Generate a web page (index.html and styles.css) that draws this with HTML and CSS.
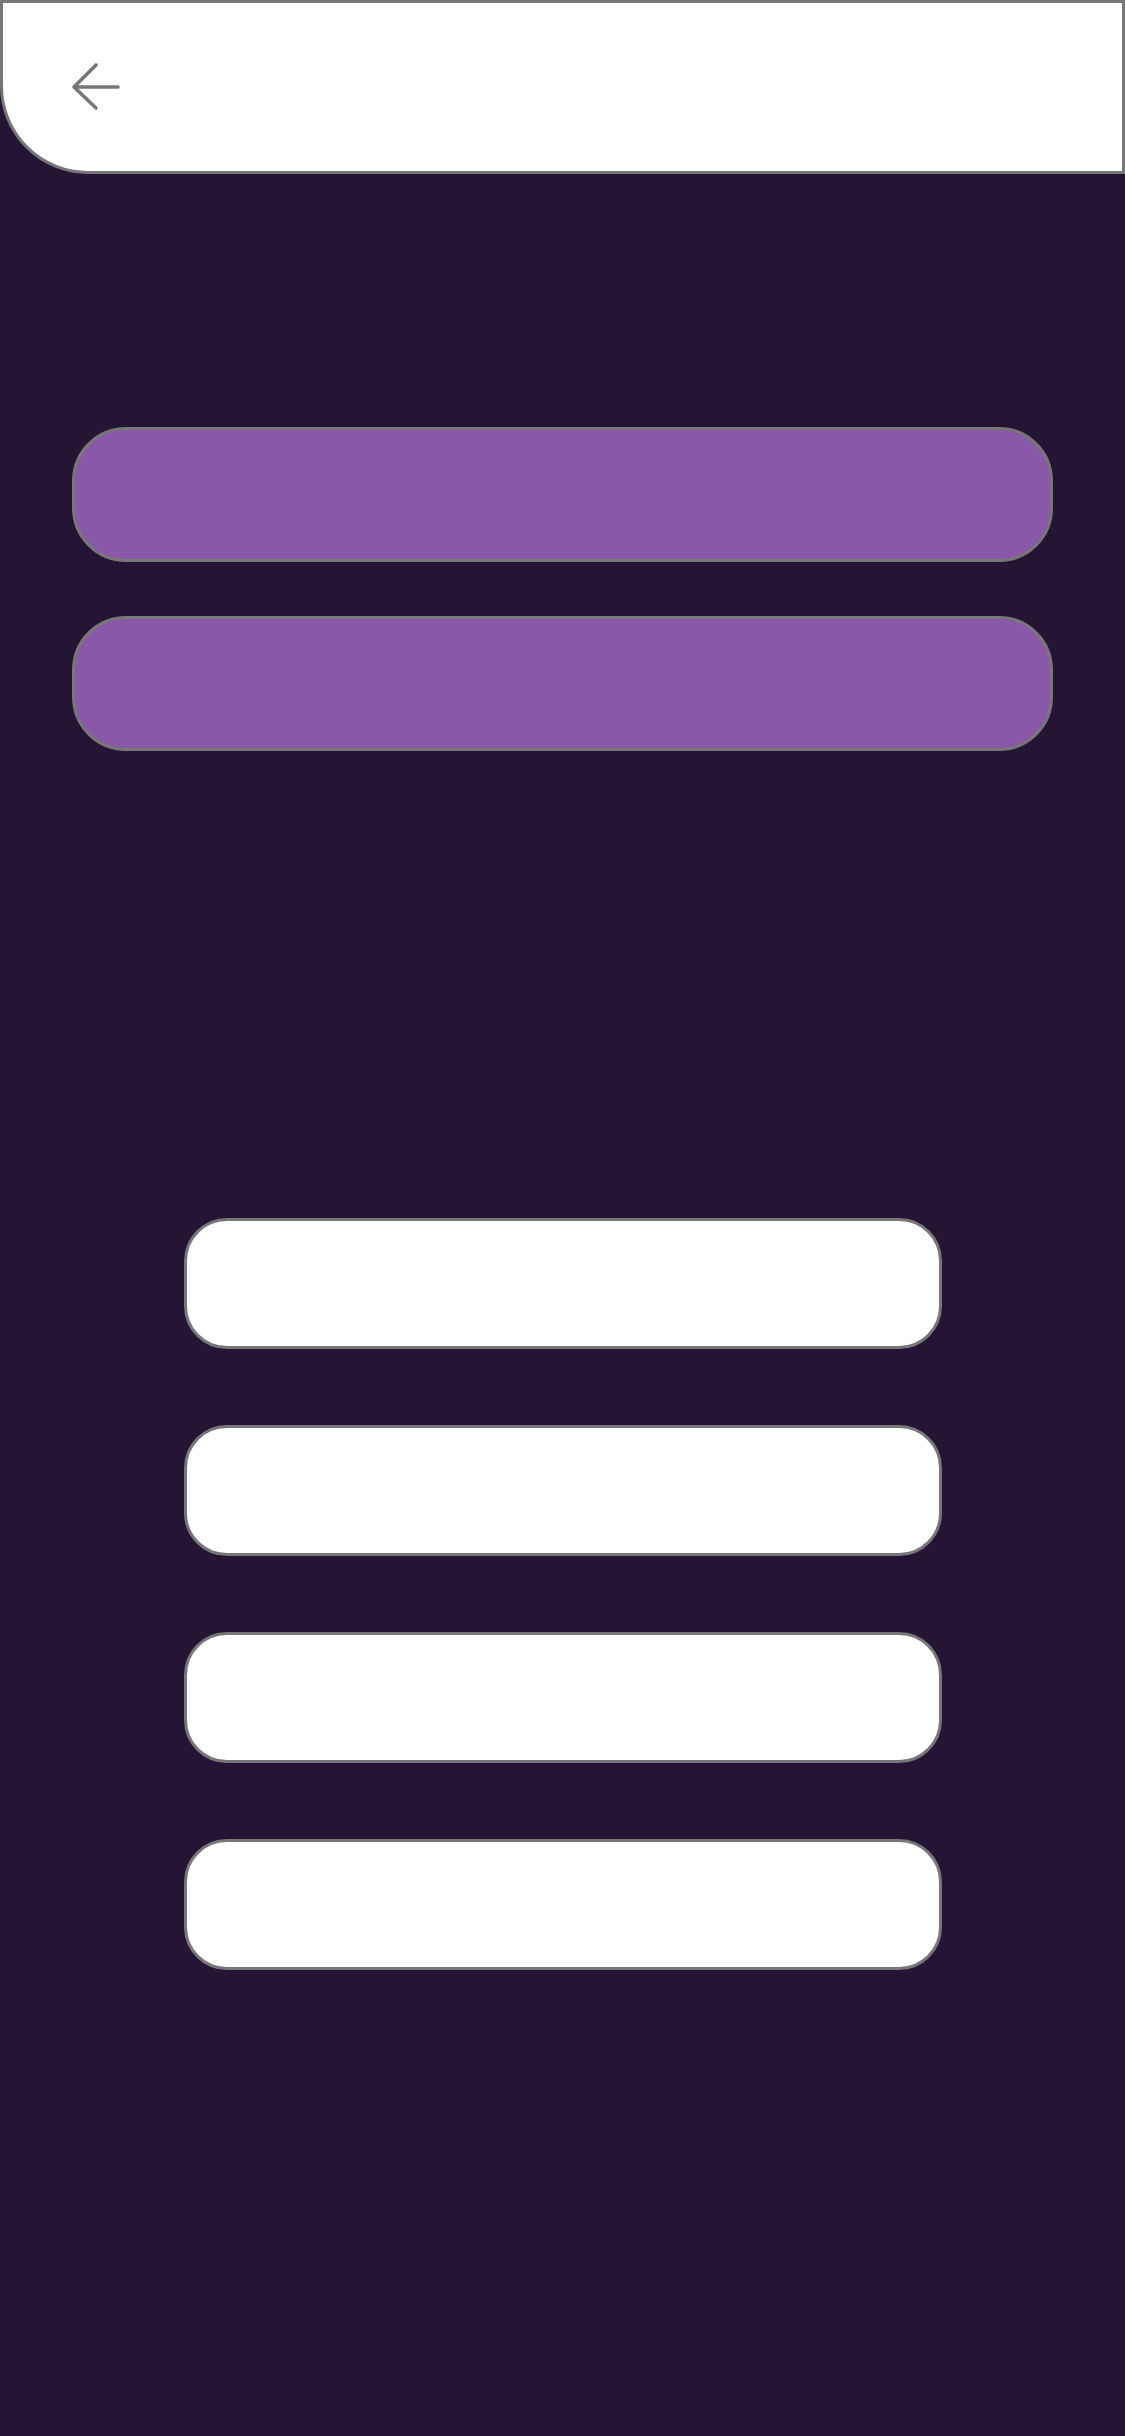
FILE: index.html
```html
<!DOCTYPE html>
<html lang="en">
<head>
<meta charset="utf-8">
<title>Screen</title>
<link rel="stylesheet" href="styles.css">
</head>
<body>
<div class="screen">
  <header class="topbar">
    <button class="back" aria-label="Back">
      <svg width="52" height="50" viewBox="0 0 52 50" aria-hidden="true">
        <path d="M26 3 L4 25 L26 46 M4 25 H48" fill="none" stroke="#777" stroke-width="3.6" stroke-linecap="round" stroke-linejoin="round"/>
      </svg>
    </button>
  </header>
  <section class="bars">
    <div class="bar"></div>
    <div class="bar"></div>
  </section>
  <section class="options">
    <div class="option"></div>
    <div class="option"></div>
    <div class="option"></div>
    <div class="option"></div>
  </section>
</div>
</body>
</html>
```
FILE: styles.css
```css
html, body {
  margin: 0;
  padding: 0;
  background: #241534;
  font-family: "Liberation Sans", Arial, sans-serif;
}
.screen {
  width: 1125px;
  min-height: 2436px;
  background: #241534;
  display: flex;
  flex-direction: column;
}
.topbar {
  box-sizing: border-box;
  height: 174px;
  background: #ffffff;
  border: 3px solid #777777;
  border-bottom-left-radius: 88px;
  display: flex;
  align-items: center;
  padding-left: 67px;
}
.back {
  background: none;
  border: 0;
  padding: 0;
  margin: 0;
  display: flex;
  width: 52px;
  height: 50px;
}
.bars {
  display: flex;
  flex-direction: column;
  gap: 54px;
  padding: 253px 72px 0 72px;
}
.bar {
  box-sizing: border-box;
  height: 135px;
  background: #8a58a9;
  border: 3px solid #777777;
  border-radius: 54px;
}
.options {
  display: flex;
  flex-direction: column;
  align-items: center;
  gap: 76px;
  padding-top: 467px;
}
.option {
  box-sizing: border-box;
  width: 758px;
  height: 131px;
  background: #ffffff;
  border: 3px solid #777777;
  border-radius: 43px;
}
```
